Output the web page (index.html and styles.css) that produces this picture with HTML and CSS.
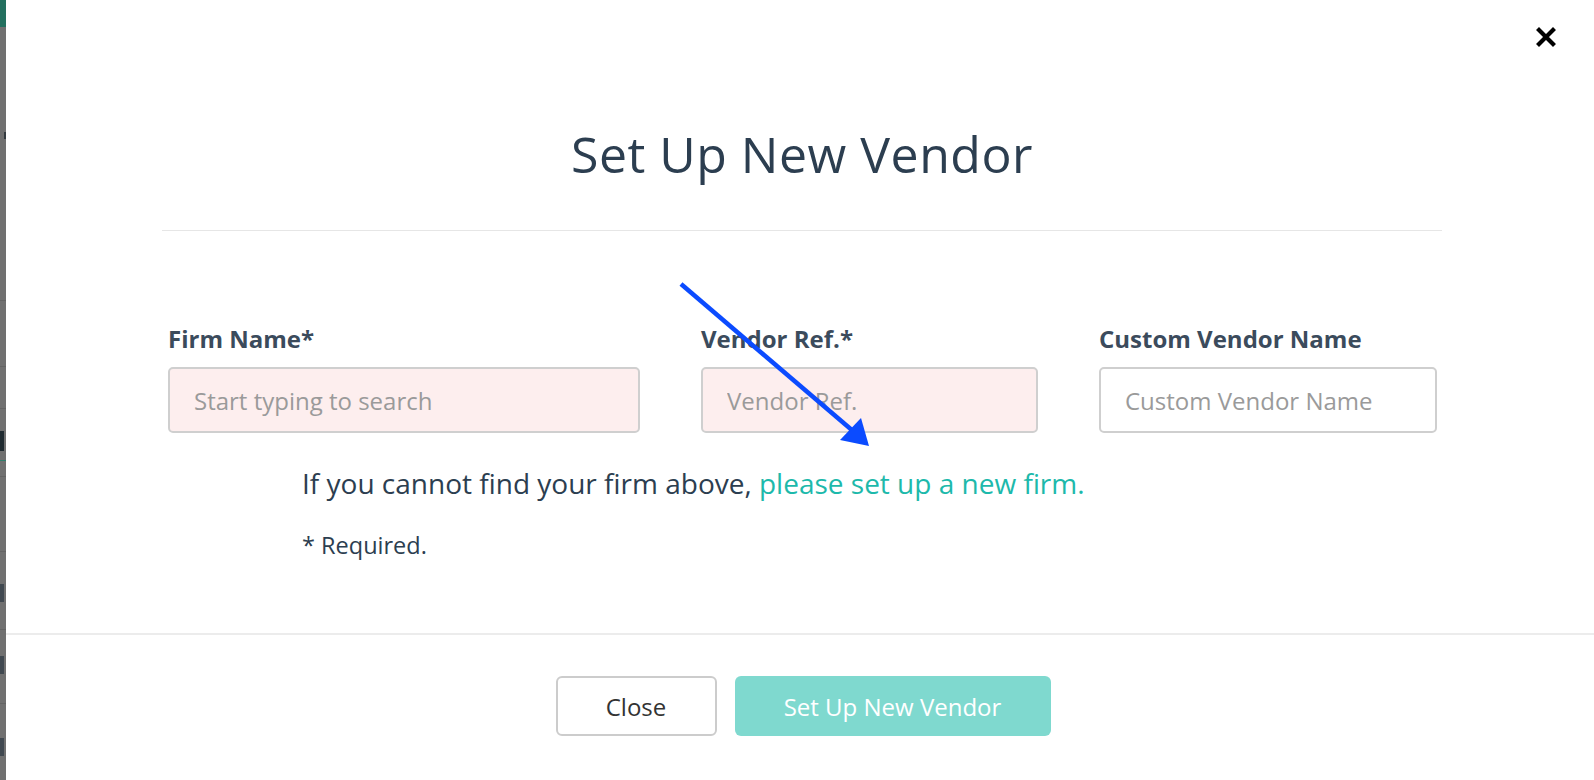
FILE: index.html
```html
<!DOCTYPE html>
<html lang="en">
<head>
    <meta charset="UTF-8">
    <meta name="viewport" content="width=device-width, initial-scale=1.0">
    <title>Set Up New Vendor</title>
    <link rel="stylesheet" href="styles.css">
</head>
<body>
    <div class="backdrop">
        <div class="backdrop-top"></div>
        <div class="backdrop-row r1"><span class="mark m1"></span></div>
        <div class="backdrop-row r2"></div>
        <div class="backdrop-row r3"></div>
        <div class="backdrop-row r4"><span class="mark m4"></span><span class="dash"></span></div>
        <div class="backdrop-row r5"></div>
        <div class="backdrop-row r6"><span class="mark m6"></span></div>
        <div class="backdrop-row r7"><span class="mark m7"></span></div>
        <div class="backdrop-row r8"><span class="mark m8"></span></div>
    </div>

    <div class="modal">
        <button class="btn-x" aria-label="Close">
            <svg width="20" height="20" viewBox="0 0 20 20">
                <path d="M3 3 L17 17 M17 3 L3 17" stroke="#000" stroke-width="4.2" stroke-linecap="square"/>
            </svg>
        </button>

        <header class="modal-header">
            <h1>Set Up New Vendor</h1>
        </header>

        <main class="modal-body">
            <div class="fields">
                <div class="field">
                    <label for="firmName">Firm Name*</label>
                    <input type="text" id="firmName" class="input required" placeholder="Start typing to search">
                </div>
                <div class="field">
                    <label for="vendorRef">Vendor Ref.*</label>
                    <input type="text" id="vendorRef" class="input required" placeholder="Vendor Ref.">
                </div>
                <div class="field">
                    <label for="customName">Custom Vendor Name</label>
                    <input type="text" id="customName" class="input" placeholder="Custom Vendor Name">
                </div>
            </div>
            <p class="hint">If you cannot find your firm above, <a href="#" class="link">please set up a new firm.</a></p>
            <p class="note">* Required.</p>
        </main>

        <footer class="modal-footer">
            <button class="btn btn-close">Close</button>
            <button class="btn btn-primary">Set Up New Vendor</button>
        </footer>
    </div>

    <!-- annotation arrow drawn over the screenshot -->
    <svg class="arrow" width="1594" height="780" viewBox="0 0 1594 780">
        <line x1="681" y1="284" x2="853" y2="431" stroke="#0b4bff" stroke-width="4.5"/>
        <polygon points="869,446 840,440 861,418" fill="#0b4bff"/>
    </svg>
</body>
</html>
```

FILE: styles.css
```css
* {
    margin: 0;
    padding: 0;
    box-sizing: border-box;
    font-family: "Open Sans", "Noto Sans", sans-serif;
}

body {
    width: 1594px;
    height: 780px;
    display: flex;
    overflow: hidden;
    background: #fff;
    position: relative;
}

/* page behind the dialog, dimmed */
.backdrop {
    width: 6px;
    background: #707070;
    display: flex;
    flex-direction: column;
}

.backdrop-top {
    height: 27px;
    background: #23705f;
}

.backdrop-row {
    border-bottom: 1px solid #646464;
    position: relative;
}

.r1 { height: 274px; }
.r2 { height: 66px; }
.r3 { height: 42px; }
.r4 { height: 68px; }
.r5 { height: 75px; }
.r6 { height: 78px; }
.r7 { height: 74px; }
.r8 { flex: 1; border-bottom: none; }

.mark {
    position: absolute;
    left: 0;
    width: 4px;
    background: #333a3f;
}

.m1 { top: 105px; height: 7px; left: 4px; width: 2px; }
.m4 { top: 22px; height: 20px; background: #1f2a30; }
.m6 { top: 32px; height: 18px; background: #404850; }
.m7 { top: 26px; height: 18px; background: #404850; }
.m8 { top: 34px; height: 18px; background: #404850; }

.dash {
    position: absolute;
    left: 0;
    top: 51px;
    width: 6px;
    height: 1px;
    border-top: 1px dashed #2f7f6c;
}

.modal {
    flex: 1;
    position: relative;
    background: #fff;
    display: flex;
    flex-direction: column;
}

.btn-x {
    position: absolute;
    top: 27px;
    right: 38px;
    border: none;
    background: none;
    cursor: pointer;
    line-height: 0;
}

.modal-header {
    margin: 0 152px 0 156px;
    padding-top: 120px;
    padding-bottom: 42px;
    border-bottom: 1px solid #e6e6e6;
    text-align: center;
}

.modal-header h1 {
    font-size: 50px;
    font-weight: 400;
    line-height: 68px;
    color: #2c3e50;
    letter-spacing: 0.5px;
}

.modal-body {
    flex: 1;
    padding: 91px 0 0 162px;
}

.fields {
    display: grid;
    grid-template-columns: 472px 337px 338px;
    gap: 61px;
}

.field label {
    display: block;
    font-size: 24px;
    font-weight: 700;
    line-height: 33px;
    color: #3b4b5c;
    margin-bottom: 12px;
}

.input {
    width: 100%;
    height: 66px;
    padding: 0 24px;
    border: 2px solid #cfcfcf;
    border-radius: 5px;
    background: #fff;
    font-size: 24px;
    color: #333;
    outline: none;
}

.input.required {
    background: #fdeeee;
}

.input::placeholder {
    color: #9a9a9a;
}

.hint {
    margin: 31px 0 0 134px;
    font-size: 28px;
    line-height: 38px;
    color: #2c3e50;
}

.link {
    color: #1db9ab;
    text-decoration: none;
}

.note {
    margin: 27px 0 0 134px;
    font-size: 23.5px;
    line-height: 33px;
    color: #2c3e50;
}

.modal-footer {
    border-top: 2px solid #ececec;
    padding: 41px 0 44px 6px;
    display: flex;
    justify-content: center;
    gap: 18px;
}

.btn {
    height: 60px;
    border-radius: 6px;
    font-size: 24px;
    cursor: pointer;
}

.btn-close {
    width: 161px;
    background: #fff;
    border: 2px solid #cccccc;
    color: #333;
}

.btn-primary {
    width: 316px;
    background: #7fd9cf;
    border: none;
    color: #fff;
}

.arrow {
    position: absolute;
    top: 0;
    left: 0;
    pointer-events: none;
}
```
